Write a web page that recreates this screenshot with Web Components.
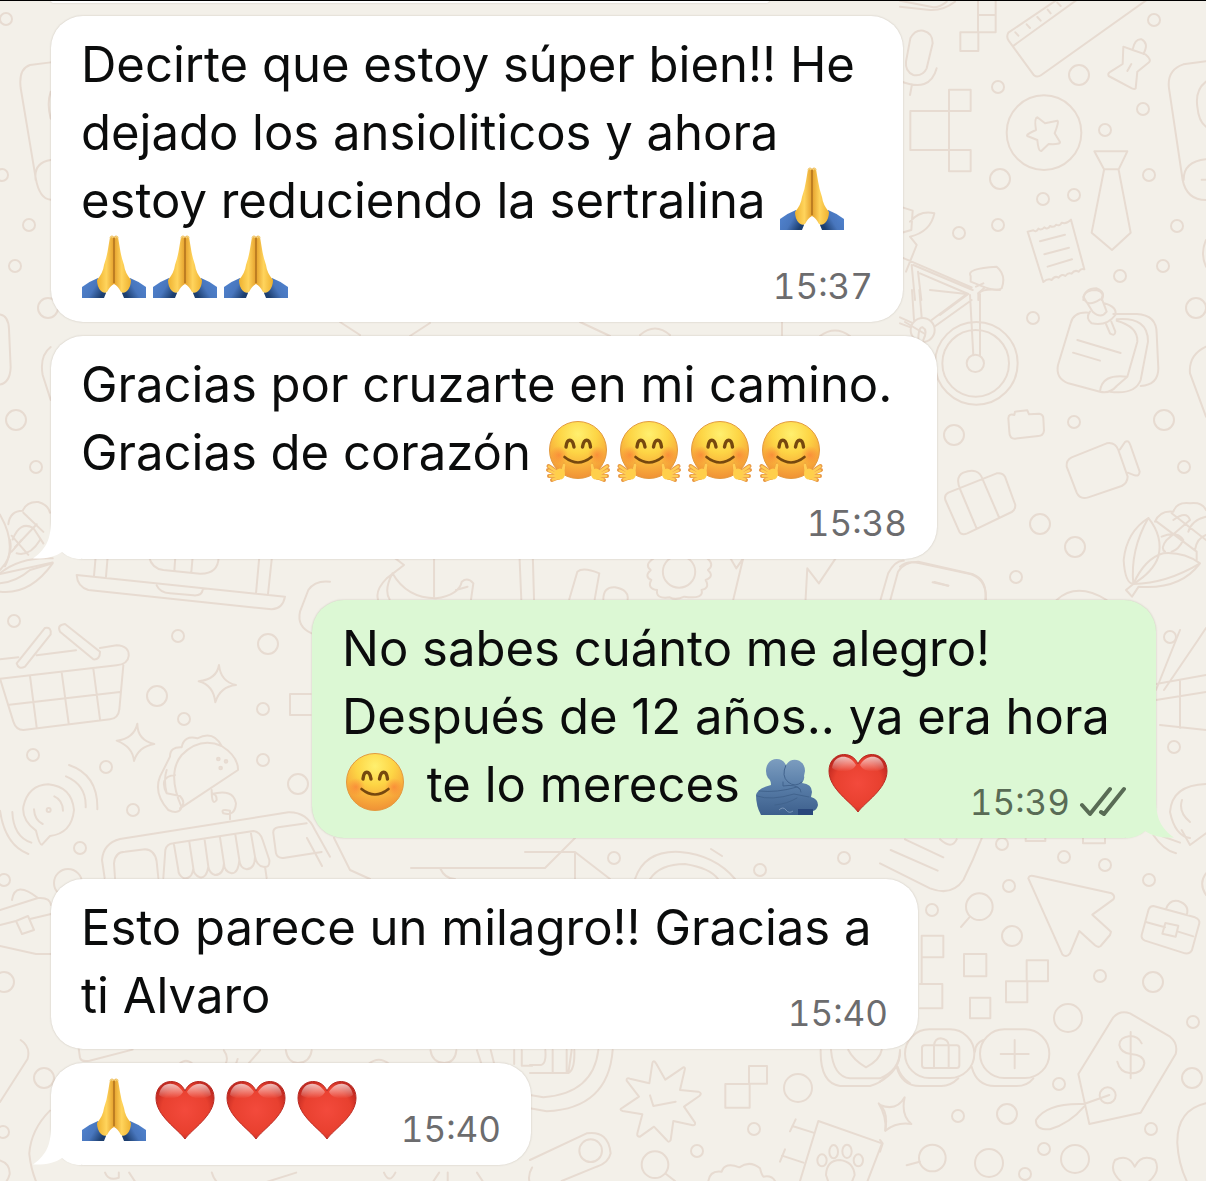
<!DOCTYPE html>
<html lang="es">
<head>
<meta charset="utf-8">
<meta name="viewport" content="width=device-width, initial-scale=1">
<title>Chat</title>
<style>
  body {
    margin: 0;
    min-height: 100vh;
    background: #f3f0e9;
    font-family: Inter, "Liberation Sans", sans-serif;
    color: #0b0c0c;
  }
</style>
</head>
<body>

<chat-thread>
  <chat-bubble style="--bubble-width: 852px" time="15:37">Decirte que estoy súper bien!! He<br>dejado los ansioliticos y ahora<br>estoy reduciendo la sertralina <chat-emoji name="pray"></chat-emoji><br><chat-emoji name="pray"></chat-emoji><chat-emoji name="pray"></chat-emoji><chat-emoji name="pray"></chat-emoji></chat-bubble>
  <chat-bubble style="--bubble-width: 886px" time="15:38" tail stacked>Gracias por cruzarte en mi camino.<br>Gracias de corazón <chat-emoji name="hugging"></chat-emoji><chat-emoji name="hugging"></chat-emoji><chat-emoji name="hugging"></chat-emoji><chat-emoji name="hugging"></chat-emoji></chat-bubble>
  <chat-bubble style="--bubble-width: 844px" time="15:39" tail outgoing>No sabes cuánto me alegro!<br>Después de 12 años.. ya era hora<br><chat-emoji name="smile"></chat-emoji> te lo mereces <chat-emoji name="hug"></chat-emoji><chat-emoji name="heart"></chat-emoji></chat-bubble>
  <chat-bubble style="--bubble-width: 867px" time="15:40">Esto parece un milagro!! Gracias a<br>ti Alvaro</chat-bubble>
  <chat-bubble style="--bubble-width: 480px" time="15:40" tail><chat-emoji name="pray"></chat-emoji><chat-emoji name="heart"></chat-emoji><chat-emoji name="heart"></chat-emoji><chat-emoji name="heart"></chat-emoji></chat-bubble>
</chat-thread>

<script>
const face = `
  <defs>
    <radialGradient id="skin" cx=".5" cy=".22" r=".82">
      <stop offset="0" stop-color="#fff06f"/>
      <stop offset=".4" stop-color="#fdd545"/>
      <stop offset=".75" stop-color="#f7a83a"/>
      <stop offset="1" stop-color="#ee8c35"/>
    </radialGradient>
    <radialGradient id="blush">
      <stop offset="0" stop-color="#fa7335" stop-opacity=".6"/>
      <stop offset="1" stop-color="#fa7335" stop-opacity="0"/>
    </radialGradient>
  </defs>
  <circle cx="32" cy="31" r="28.5" fill="url(#skin)" stroke="#e39a3f" stroke-width="1"/>
  <circle cx="13" cy="36" r="9" fill="url(#blush)"/>
  <circle cx="51" cy="36" r="9" fill="url(#blush)"/>
  <g fill="none" stroke="#76480f" stroke-linecap="round">
    <path d="M20 28C21 19 26.500 19 28 28M36.500 28C38 19 43.500 19 44.500 28" stroke-width="3.400"/>
    <path d="M18.500 38Q32 49 45.500 38" stroke-width="2.600"/>
  </g>`;

const emojis = {
  smile: { label: '😊', art: face },
  hugging: {
    label: '🤗',
    art: `${face}
      <g id="hand" stroke-linecap="round" stroke-linejoin="round">
        <path d="M18 44Q20 48 18 54L14 60Q9 62 6 58L8 50L14 52Z" fill="#ffcf4b" stroke="#eda33f" stroke-width="1"/>
        <path d="M10 52L2.500 47M9 54L2 51M9 57L3 57M11 59L6 61" stroke="#e99a46" stroke-width="4"/>
        <path d="M11 53L3 47.500M10 55L3 51.500M10 57L4 57M12 59L7 60.500M18 46L17 54" stroke="#ffcd55" stroke-width="2.500"/>
        <ellipse cx="14" cy="55" rx="5" ry="5.500" fill="#ffcf4b"/>
      </g>
      <use href="#hand" transform="matrix(-1 0 0 1 64 0)"/>`
  },
  heart: {
    label: '❤️',
    art: `
      <defs>
        <radialGradient id="red" cx=".5" cy=".5" r=".62">
          <stop offset="0" stop-color="#f34a3c"/>
          <stop offset=".65" stop-color="#e8402f"/>
          <stop offset="1" stop-color="#b5221c"/>
        </radialGradient>
        <linearGradient id="shine" x2="0" y2="1">
          <stop offset="0" stop-color="#fff" stop-opacity=".7"/>
          <stop offset="1" stop-color="#fff" stop-opacity="0"/>
        </linearGradient>
      </defs>
      <path d="M32 61C25 51 3 38 3 20C3 1 26-2 32 13C38-2 61 1 61 20C61 38 39 51 32 61Z" fill="url(#red)" stroke="#b92a22" stroke-width="1"/>
      <path d="M6 17C8 3 23 2 30 14C26 22 12 22 6 17ZM58 17C56 3 41 2 34 14C38 22 52 22 58 17Z" fill="url(#shine)"/>`
  },
  pray: {
    label: '🙏',
    art: `
      <defs>
        <linearGradient id="palm">
          <stop offset="0" stop-color="#eeb12f"/>
          <stop offset=".55" stop-color="#ffd45c"/>
          <stop offset="1" stop-color="#e4a02c"/>
        </linearGradient>
        <linearGradient id="sleeve" x2="1" y2=".5">
          <stop offset="0" stop-color="#5285d2"/>
          <stop offset=".6" stop-color="#4876bd"/>
          <stop offset="1" stop-color="#1d3f70"/>
        </linearGradient>
      </defs>
      <g id="half">
        <path d="M0 52Q8 46 16 43L24 58L22 63H0Z" fill="url(#sleeve)"/>
        <path d="M28 2Q30-1 32 2V49Q28 51 25 57Q22 59 19 56Q15 52 15 45Q21 38 22 30Q25 21 26 14Z" fill="url(#palm)"/>
      </g>
      <use href="#half" transform="matrix(-1 0 0 1 64 0)"/>
      <path d="M32 3V48" stroke="#a96b1c" stroke-width="1.300" fill="none"/>
      <path d="M28 3Q30 0 31 3M33 3Q35 0 36 3" stroke="#f3cf7c" stroke-width="1.500" fill="none"/>`
  },
  hug: {
    label: '🫂',
    art: `
      <defs>
        <linearGradient id="blue" x2="0" y2="1">
          <stop offset="0" stop-color="#7c9dbf"/>
          <stop offset=".5" stop-color="#587da8"/>
          <stop offset="1" stop-color="#3d5f8c"/>
        </linearGradient>
      </defs>
      <path d="M11 20C11 5 29 5 31 15C34 5 50 7 50 20L49 25Q50 28 47 32Q57 33 57 41L56 46Q63 48 63 54Q62 59 58 60V64H6Q1 55 1 44Q3 37 16 34Q16 29 13 27Q11 24 11 20Z" fill="url(#blue)"/>
      <g fill="none" stroke="#41638d" stroke-width="1" stroke-linecap="round">
        <path d="M31 14Q26 25 33 31Q40 37 47 31M28 31V35Q41 33 45 38M2 45Q16 50 39 43L54 46M4 40Q22 42 42 36Q46 37 46 41M20 54Q32 53 42 47"/>
      </g>
      <path d="M24 59Q28 55 31 59T38 60" fill="none" stroke="#7895b8" stroke-width="1"/>
      <path d="M43 58H58V64H43Z" fill="#29477b"/>`
  }
};

class ChatEmoji extends HTMLElement {
  constructor() {
    super();
    this.attachShadow({ mode: 'open' });
  }

  connectedCallback() {
    const emoji = emojis[this.getAttribute('name')];
    this.shadowRoot.innerHTML = `
      <style>
        :host {
          display: inline-block;
          width: 64px;
          height: 64px;
          margin: 0 6px 0 1px;
          vertical-align: -13px;
        }
        svg { display: block; overflow: visible; }
      </style>
      <svg width="64" height="64" viewBox="0 0 64 64" role="img" aria-label="${emoji.label}">${emoji.art}</svg>
    `;
  }
}

customElements.define('chat-emoji', ChatEmoji);

class ChatBubble extends HTMLElement {
  constructor() {
    super();
    this.attachShadow({ mode: 'open' });
  }

  connectedCallback() {
    const time = this.getAttribute('time');
    const tail = this.hasAttribute('tail')
      ? '<svg class="tail" width="48" height="40" viewBox="0 0 48 40" aria-hidden="true"><path d="M18 0C18 21 13 30 0 39.500C12 40 22 38 29 33C36 39 42 40 48 40V0Z"/></svg>'
      : '';
    const ticks = this.hasAttribute('outgoing')
      ? '<svg class="ticks" width="48" height="32" viewBox="0 0 48 32" role="img" aria-label="Entregado"><path d="M4 19L12 28L32 3M23 26L26 28L46 3"/></svg>'
      : '';

    this.shadowRoot.innerHTML = `
      <style>
        :host {
          --fill: #fff;
          --meta: #6c6c6e;
          display: grid;
          position: relative;
          box-sizing: border-box;
          width: min(100%, var(--bubble-width));
          margin-bottom: 14px;
          padding: 15px 30px 19px;
          border-radius: 32px;
          background: var(--fill);
          box-shadow: 0 0 2px rgba(80, 60, 40, .25);
        }
        :host([tail]) { margin-bottom: 41px; }
        :host([outgoing]) {
          --fill: #dcf8d4;
          --meta: #596b55;
          align-self: flex-end;
        }
        .text {
          grid-area: 1 / 1;
          font-size: 49px;
          line-height: 68px;
        }
        .meta {
          grid-area: 1 / 1;
          align-self: end;
          justify-self: end;
          display: flex;
          align-items: center;
          gap: 8px;
          height: 40px;
          margin-bottom: -3px;
          color: var(--meta);
          font-size: 35px;
          font-variant-numeric: tabular-nums;
          line-height: 40px;
        }
        :host([stacked]) .meta { grid-area: 2 / 1; margin-top: 16px; }
        .ticks {
          fill: none;
          stroke: var(--meta);
          stroke-width: 4;
          stroke-linecap: round;
          stroke-linejoin: round;
        }
        .tail {
          position: absolute;
          left: -18px;
          bottom: 0;
          fill: var(--fill);
        }
        :host([outgoing]) .tail {
          left: auto;
          right: -18px;
          transform: scaleX(-1);
        }
      </style>
      ${tail}
      <div class="text"><slot></slot></div>
      <div class="meta"><time datetime="${time}">${time}</time>${ticks}</div>
    `;
  }
}

customElements.define('chat-bubble', ChatBubble);

// dots of the wallpaper: x, y, radius
const dots = [
  [1154, 20, 6], [1079, 75, 10], [998, 87, 6], [1143, 109, 6], [1105, 130, 6], [1149, 175, 6],
  [1000, 179, 10], [1043, 199, 6], [1074, 195, 6], [959, 233, 6], [998, 225, 6], [1177, 226, 6],
  [1120, 276, 6], [1163, 266, 6], [1033, 318, 6], [1196, 308, 10], [1074, 422, 6], [1164, 420, 10],
  [954, 435, 10], [1184, 467, 6], [1040, 524, 10], [1075, 547, 10], [1016, 577, 6],
  [14, 621, 6], [178, 636, 6], [268, 644, 10], [157, 696, 10], [184, 719, 6], [263, 709, 6],
  [33, 755, 6], [106, 767, 6], [263, 760, 6], [298, 784, 10], [133, 810, 6], [80, 848, 6],
  [1002, 844, 6], [1064, 857, 6], [1105, 865, 6], [1149, 880, 6], [1009, 886, 6], [932, 910, 6],
  [1012, 936, 10], [1100, 976, 6], [1153, 982, 10], [1068, 1018, 14], [1193, 1022, 6], [1192, 1078, 10],
  [1059, 1084, 6], [958, 1116, 6], [1007, 1114, 10], [1151, 1129, 6], [1044, 1149, 6], [1075, 1159, 14],
  [989, 1163, 14], [1025, 1174, 6], [798, 1088, 14], [754, 1129, 6], [697, 1151, 6],
  [6, 19, 6], [2, 175, 6], [29, 225, 6], [15, 266, 6], [48, 308, 10], [16, 420, 10], [36, 467, 6],
  [44, 1078, 10], [3, 1132, 6], [614, 858, 6], [760, 870, 6], [844, 858, 6], [4, 880, 6], [1170, 637, 6],
  [1174, 747, 6], [68, 883, 14], [4, 982, 10]
];

class ChatWallpaper extends HTMLElement {
  constructor() {
    super();
    this.attachShadow({ mode: 'open' });
  }

  connectedCallback() {
    const circles = dots.map(([x, y, r]) => `<circle cx="${x}" cy="${y}" r="${r}"/>`).join('');
    this.shadowRoot.innerHTML = `
      <style>
        :host { display: block; overflow: hidden; pointer-events: none; }
        svg {
          display: block;
          width: 100%;
          height: 100%;
          fill: none;
          stroke: #e7dbd1;
          stroke-width: 2;
          stroke-linecap: round;
          stroke-linejoin: round;
        }
        path, circle, rect, ellipse { vector-effect: non-scaling-stroke; }
      </style>
      <svg viewBox="0 0 1206 1181" preserveAspectRatio="xMidYMin slice" aria-hidden="true">
        ${circles}
        <!-- microphone, ruler, badge, tie, receipt, music player -->
        <g transform="translate(900 0) scale(.33333)">
          <path d="M0 20L90 30Q130 32 165 5M0 2L100 22Q120 22 140 5"/>
          <path d="M31 115Q45 88 70 92Q98 98 98 130L80 205Q68 230 40 225Q15 215 18 185ZM0 243Q90 280 110 205M36 253L30 285"/>
          <path d="M234 0V45H287V0M234 45V97H287V45M181 97H235V153H181ZM147 269H212V333H147ZM31 333H147V450H31ZM147 450H212V514H147Z"/>
          <path d="M470 0L325 98Q318 110 326 122L402 226Q412 234 424 225L740 0M530 0L342 136M346 97L355 107M380 73L390 84M412 51L422 62M443 29L452 40M472 8L482 18"/>
          <path d="M670 140L698 150L736 163Q754 178 748 186L712 215L707 265Q703 270 690 262L626 228Q622 220 632 215L668 192ZM698 148Q705 115 725 118Q748 130 730 162M694 192L682 213"/>
          <circle cx="432" cy="398" r="112"/>
          <path d="M412 352L435 370L472 362Q478 364 464 400L480 426Q482 434 446 432L424 453Q415 456 412 420L382 408Q376 404 408 390Q402 355 412 352Z"/>
          <path d="M583 454H682L656 508H612ZM612 510L575 698L636 750L692 698L656 510"/>
          <path d="M383 695L400 691Q408 698 415 686Q425 692 433 682Q444 690 450 678Q462 684 468 674Q480 680 485 668Q498 674 513 659L553 808Q543 804 536 815Q524 808 515 821Q505 816 496 828Q486 820 476 833Q464 826 455 840Q444 834 430 846ZM420 724L495 704M433 763L507 743M443 800L516 778"/>
          <path d="M918 184L850 193Q800 210 807 265L848 540Q860 600 918 600M918 245Q885 270 892 320Q896 365 918 380M918 478Q850 485 851 540M905 539H930M918 720Q900 760 918 800"/>
          <path d="M0 620L38 632L34 690L0 700M30 665Q60 630 103 640Q92 695 30 710L50 735L18 815M0 770L215 862M40 795L218 870M35 795L45 900M54 815L64 900M60 820L205 882L120 945M212 828Q198 805 290 800Q320 825 305 865Q292 875 255 862L212 845ZM228 860L250 850M235 900V880L255 862M550 900Q552 865 590 865Q618 875 605 900"/>
        </g>
        <!-- bicycle, notes, camera, suitcase, corn -->
        <g transform="translate(900 290) scale(.33333)">
          <path d="M36 0L42 90M58 0L65 82M0 82L35 98M0 100L32 112M200 12L95 90M215 30L106 108M90 0L200 12M235 10Q250-5 300 0M210 15L220 196M240 12V196"/>
          <circle cx="68" cy="120" r="36"/><path d="M55 150Q55 110 68 112Q84 120 70 150"/>
          <circle cx="229" cy="220" r="124"/><circle cx="227" cy="220" r="100"/><circle cx="226" cy="220" r="26"/>
          <path d="M565 68Q520 65 512 100L474 225Q466 265 505 280L600 305Q630 312 650 288L682 260L712 155Q715 110 650 92M600 305Q605 250 682 260M650 88Q745 80 744 155L722 270Q705 315 630 305M640 72H710Q770 75 770 130L775 235Q775 285 722 288M532 150L662 189M519 188L600 212"/>
          <path d="M550 20Q555 0 590 0Q615 8 605 25L620 65Q603 88 578 65ZM550 20Q560 55 600 28M570 65Q555 85 575 100Q620 110 646 75Q652 50 612 40M618 102L630 130Q645 140 646 125L634 95"/>
          <path d="M325 385Q326 370 343 375L345 365L382 361L387 373L418 371Q430 374 430 385L432 422Q430 438 415 438L345 446Q328 446 328 425Z"/>
          <path d="M515 502L620 460Q645 455 655 480L683 560Q682 580 665 588L565 622Q540 630 530 608L500 530Q498 510 515 502ZM660 478L675 456Q685 448 691 465L719 545Q718 560 704 556L683 548"/>
          <path d="M145 608L290 550Q308 547 315 560L346 645Q346 660 335 666L202 730Q185 737 178 725L136 630Q132 615 145 608ZM180 597Q165 560 190 548Q235 530 248 568M180 597L230 716M248 568L298 684"/>
          <path d="M745 684Q680 725 671 810Q675 880 700 882Q690 780 745 684Q790 740 775 800Q760 845 700 882L678 900L696 920L716 890Q840 900 900 820Q850 785 790 790Q735 805 700 882Q800 880 900 820"/>
          <path d="M765 695Q780 660 820 665Q830 635 870 640Q905 635 918 660M770 695L890 785V810M815 670L918 750M865 725Q875 690 918 680M785 740Q830 720 850 750Q835 780 815 785M820 690Q860 660 870 690L800 750Q780 775 795 785M918 735Q890 745 885 780"/>
          <path d="M918 170Q865 195 870 250L918 380M0 830Q20 810 60 820L200 850Q260 860 258 930M98 877L145 887M470 930Q530 875 620 930"/>
        </g>
        <!-- laptop, basket, sparkles, taco, van -->
        <g transform="translate(0 540) scale(.33333)">
          <path d="M230 105L855 170Q848 207 815 208L265 150Q232 140 230 105ZM470 136Q480 158 510 160L580 166Q605 168 608 150M287 50L282 108M323 50L318 110M778 50L768 160M816 50L804 162M447 50Q455 85 490 90L600 101Q655 102 656 50M526 50L523 92M578 50L574 96"/>
          <path d="M0 358L55 352M110 346L228 331M300 324L350 316Q388 318 386 348Q384 372 350 376L0 416M370 376L358 508Q355 535 330 538L70 570Q48 570 40 545L0 416M90 408L110 562M185 397L206 550M280 386L300 538M28 494L360 456"/>
          <path d="M135 264Q155 260 152 283L75 380Q55 390 50 370ZM195 252L300 335Q300 360 280 358L180 275Q170 255 195 252Z"/>
          <path d="M657 375Q662 425 708 435Q660 440 646 487Q640 435 596 424Q650 418 657 375ZM412 551Q412 600 463 612Q415 620 402 663Q398 620 350 602Q402 595 412 551Z"/>
          <path d="M545 802Q500 700 545 645Q600 590 665 618Q715 650 714 690L545 802Q535 825 505 810Q460 760 480 710L510 650Q510 620 545 622Q552 585 592 595Q640 570 665 618M525 705Q475 710 500 760L540 768Q560 790 540 805M500 690Q490 720 500 760"/>
          <circle cx="655" cy="657" r="4"/><circle cx="678" cy="664" r="4"/><circle cx="662" cy="684" r="4"/>
          <path d="M635 750Q635 800 650 780Q650 760 635 762Q700 745 708 790Q705 830 670 820Q660 805 690 812V838"/>
          <path d="M108 872Q65 840 70 800Q85 735 145 733Q215 740 222 810Q215 880 150 888L126 914Q118 915 108 872ZM102 808Q104 840 128 852M163 769Q188 780 189 812M207 675Q295 705 292 808M198 709Q260 735 257 802M0 812Q15 915 85 942M37 816Q40 890 94 908"/>
          <circle cx="146" cy="810" r="6"/>
          <path d="M314 1014L306 960Q310 910 360 897L865 817Q920 815 945 870L990 950M345 1014L342 970Q345 935 375 935L435 928Q465 930 470 965L475 1014M490 1014L496 930Q500 912 520 910L760 873Q780 875 788 900L808 960Q810 985 790 980Q770 978 765 950L752 875M765 950Q765 985 740 988Q720 985 718 960L706 884M718 960Q715 1000 695 1000Q672 995 672 970L660 892M672 970Q670 1005 645 1005Q628 1000 625 980L614 900M625 980Q620 1015 600 1012Q580 1005 580 985L568 906M580 985Q575 1020 550 1014Q535 1005 535 990L522 914M820 880Q818 865 835 862L920 850M820 880L828 940Q832 955 850 954L965 936M795 980L800 1014"/>
          <path d="M935 280Q890 260 900 215L925 150Q945 120 990 125M932 462H870V525H932"/>
          <path d="M0 130Q50 125 90 90L158 70Q90 165 0 155M0 100Q60 50 158 55M30 0Q40 50 0 90M35 35L65 0M50 40Q90 50 120 0"/>
        </g>
        <!-- left margin -->
        <g transform="scale(.33333 .38265)">
          <path d="M152 163L90 170Q55 180 62 230L107 465Q118 520 152 522M152 418Q100 425 107 470M152 240Q140 270 152 310M0 822Q25 825 27 860L32 960Q30 1000 0 1005M152 907Q118 930 128 980L152 1045M0 1345Q50 1420 15 1480M0 1500L158 1470"/>
          <path d="M25 1370Q30 1335 68 1335Q80 1310 115 1312Q145 1320 150 1340M38 1410Q60 1360 100 1380L130 1420M70 1340L130 1390M35 1400L85 1450M45 1430L110 1370"/>
        </g>
        <!-- strip under the second message -->
        <g transform="translate(300 540) scale(.5778 .33333)">
          <path d="M165 55L180 75L150 115Q130 150 135 178M160 100Q145 150 155 178M160 100Q185 175 235 175Q275 165 280 125Q290 110 300 130L296 178M270 150L290 140M232 55V175M380 55L383 178M403 55L405 178M466 178L480 95Q490 80 518 100L510 178M525 178Q525 140 545 142Q570 150 567 178M745 55L755 85L767 55L750 178M927 55L898 130L878 85L875 178M1005 178L1018 100Q1030 60 1045 62M1022 178L1035 95Q1045 65 1070 65L1165 103Q1190 120 1186 178M1098 126L1122 137"/>
          <path d="M612 55Q595 75 607 90Q595 110 608 120Q600 145 618 150Q615 178 640 172Q650 182 665 170Q700 178 695 150Q710 145 702 120Q718 110 706 90Q718 75 705 55"/>
          <ellipse cx="656" cy="95" rx="28" ry="48"/>
        </g>
        <!-- cursor, briefcase, pixels, price tag -->
        <g transform="translate(880 830) scale(.33333)">
          <path d="M445 145Q447 135 460 138L695 190Q707 198 700 208L637 254L693 305L690 315L662 348Q655 354 645 346L598 303L570 370Q558 385 547 373Z"/>
          <path d="M820 228L945 262Q960 268 958 280L936 360Q930 372 915 370L795 332Q783 326 785 315L806 238Q810 228 820 228ZM858 237Q868 208 895 213Q930 225 920 255M800 277L855 292M892 304L940 319M856 279L895 287L887 320L847 311Z"/>
          <circle cx="298" cy="230" r="40"/><path d="M268 262L243 291"/>
          <path d="M125 317H190V382H125ZM125 382V462M120 462H187V535H120M252 372H319V439H252ZM270 503H331V565H270ZM440 391H504V454H440ZM378 454H442V517H378Z"/>
          <rect x="75" y="598" width="208" height="146" rx="73"/><rect x="300" y="598" width="208" height="146" rx="73"/>
          <path d="M50 710Q65 768 120 768H180Q210 770 235 745M275 710Q290 768 345 768H405Q440 770 460 745M285 665Q285 640 310 630M404 630V715M362 672H446M60 665Q60 720 0 755M162 646Q165 625 182 625Q205 628 206 646M162 646V714M206 646V714"/>
          <rect x="126" y="646" width="112" height="68" rx="8"/>
          <path d="M700 562Q720 540 750 550L870 620Q895 640 887 672L782 848L628 882L595 732ZM785 640Q775 618 750 618Q718 622 718 645Q722 668 752 672Q792 675 793 700Q788 730 752 730Q720 728 712 695M752 606V745M688 795L612 822Q500 818 468 870Q465 900 510 898Q570 880 612 830"/>
          <circle cx="683" cy="796" r="24"/>
          <path d="M0 825Q50 845 74 802Q62 855 94 882Q50 875 16 902Q25 845 0 825M764 1010Q785 970 825 990Q845 1025 800 1060M764 1010Q745 970 705 990Q685 1025 730 1060M978 820Q890 840 892 940Q895 1000 920 1053M978 130Q955 160 978 195M119 995L80 1006M0 930L8 940L0 965"/>
          <circle cx="157" cy="984" r="40"/>
          <path d="M0 100L150 175Q215 200 250 150Q280 90 305 25M32 60L173 122M75 28L190 82M180 28Q215 60 230 28M437 25V33H496V25M609 25V40H675V25M820 15Q850 60 888 70M845 18L900 38M905 0L930 45L978 10"/>
        </g>
        <!-- burst, tube, poster -->
        <g transform="translate(530 1040) scale(.33333)">
          <path d="M367 70Q370 58 378 70L406 119L460 82Q467 82 464 90L450 150L505 155Q518 160 508 168L462 200L495 248Q497 258 485 255L430 243L422 300Q416 310 410 300L372 260L330 290Q320 290 322 280L337 223L278 213Q265 208 278 203L327 170L290 122Q288 112 300 116L358 130ZM360 166L370 198L437 185"/>
          <path d="M657 78H711V131H657ZM586 132H659V203H586ZM865 243L1056 310L1010 430M865 243L810 423M850 278L787 258M797 238L780 274M820 368L756 347M765 328L750 365"/>
          <ellipse cx="876" cy="361" rx="14" ry="18"/><ellipse cx="911" cy="335" rx="13" ry="20"/><ellipse cx="951" cy="334" rx="14" ry="20"/><ellipse cx="985" cy="361" rx="14" ry="18"/>
          <path d="M888 405Q890 360 930 360Q970 365 974 405L960 440H900ZM535 423Q540 390 575 395Q585 365 628 382Q660 360 690 385Q695 405 700 410Q725 405 735 423"/>
          <circle cx="182" cy="332" r="34"/><circle cx="375" cy="374" r="40"/>
          <path d="M0 360L170 280Q235 270 242 340Q235 370 200 380L95 423M408 402L435 423M205 30Q190 160 40 172L0 165M248 30Q235 205 50 214L0 205M0 75H30Q50 75 46 30M0 99H115Q135 90 133 30M68 30V97M110 30V97M115 99L125 30M872 30Q870 130 930 138H1020Q1050 130 1065 112M903 30Q910 110 960 115H1050Q1110 90 1110 30M955 30Q970 60 1008 82Q1050 60 1055 30M1140 130Q1110 110 1103 80M1050 825"/>
          <path d="M1050 194Q1048 192 1046 190Q1070 230 1066 272"/>
        </g>
        <!-- lower left corner -->
        <g transform="translate(0 1040) scale(.3444)">
          <path d="M60 0Q90 20 80 55L0 180M225 0L232 50Q235 65 260 60L385 28M145 205Q90 260 85 330Q90 380 110 423M0 350Q30 360 28 390Q20 420 0 420M305 385Q315 410 345 400V385M375 385L400 423M615 385Q620 405 640 423M740 423L860 385M1115 385Q1130 420 1148 385M1300 385V412H1385M1275 385L1250 423M1000 423Q1030 405 1060 423M1385 385L1410 423M1540 420Q1530 395 1545 370M830 30Q835 65 865 67Q900 65 905 30M1250 30Q1255 65 1290 67Q1322 65 1325 30M520 70Q540 50 560 70M1070 70Q1100 45 1130 70M650 30Q665 50 655 70M720 70L755 30M685 70L690 55M1385 30L1398 70M1425 30L1435 70M1493 30V70M1515 30V75H1545"/>
        </g>
        <!-- strip under the third message and the narrow margins -->
        <path d="M0 910L38 898Q50 897 51 905M0 946L36 954H51M12 900Q15 880 38 898M0 925L16 921M30 919L51 914M16 921L28 916L34 930L22 934Z"/>
        <path d="M411 868H545L575 838M440 868Q445 879 455 879M525 852H575V879M575 852L610 879M635 879Q645 850 680 852Q715 855 735 879M650 879Q660 864 685 864Q710 868 718 879M711 849L722 856M334 838L350 870L370 879M307 838L322 866"/>
        <path d="M1156 690L1180 630M1164 690L1198 640L1206 628M1156 684L1206 675M1156 700L1206 692M1160 725L1206 730M1180 680V728M1206 784Q1172 785 1170 812Q1175 836 1190 838M1182 800Q1178 812 1190 822"/>
        <path d="M340 322L360 335M410 336L430 323M580 322L610 336M640 335Q655 322 670 335M782 322V335M820 336Q835 325 850 336M905 322L925 334"/>
      </svg>
    `;
  }
}

customElements.define('chat-wallpaper', ChatWallpaper);

class ChatThread extends HTMLElement {
  constructor() {
    super();
    this.attachShadow({ mode: 'open' });
    this.shadowRoot.innerHTML = `
      <style>
        :host {
          display: flex;
          flex-direction: column;
          position: relative;
          box-sizing: border-box;
          min-height: 100vh;
          padding: 0 50px 0 51px;
          border-top: 1px solid #000;
          overflow: hidden;
        }
        chat-wallpaper { position: absolute; inset: -1px 0 0; }
        .previous {
          position: relative;
          flex: none;
          width: 65%;
          height: 2px;
          margin-bottom: 13px;
          border-radius: 0 0 32px 32px;
          background: #fff;
          box-shadow: 0 0 2px rgba(80, 60, 40, .25);
        }
        ::slotted(chat-bubble:last-child) { margin-bottom: 12px !important; }
      </style>
      <chat-wallpaper></chat-wallpaper>
      <div class="previous"></div>
      <slot></slot>
    `;
  }
}

customElements.define('chat-thread', ChatThread);
</script>
</body>
</html>
